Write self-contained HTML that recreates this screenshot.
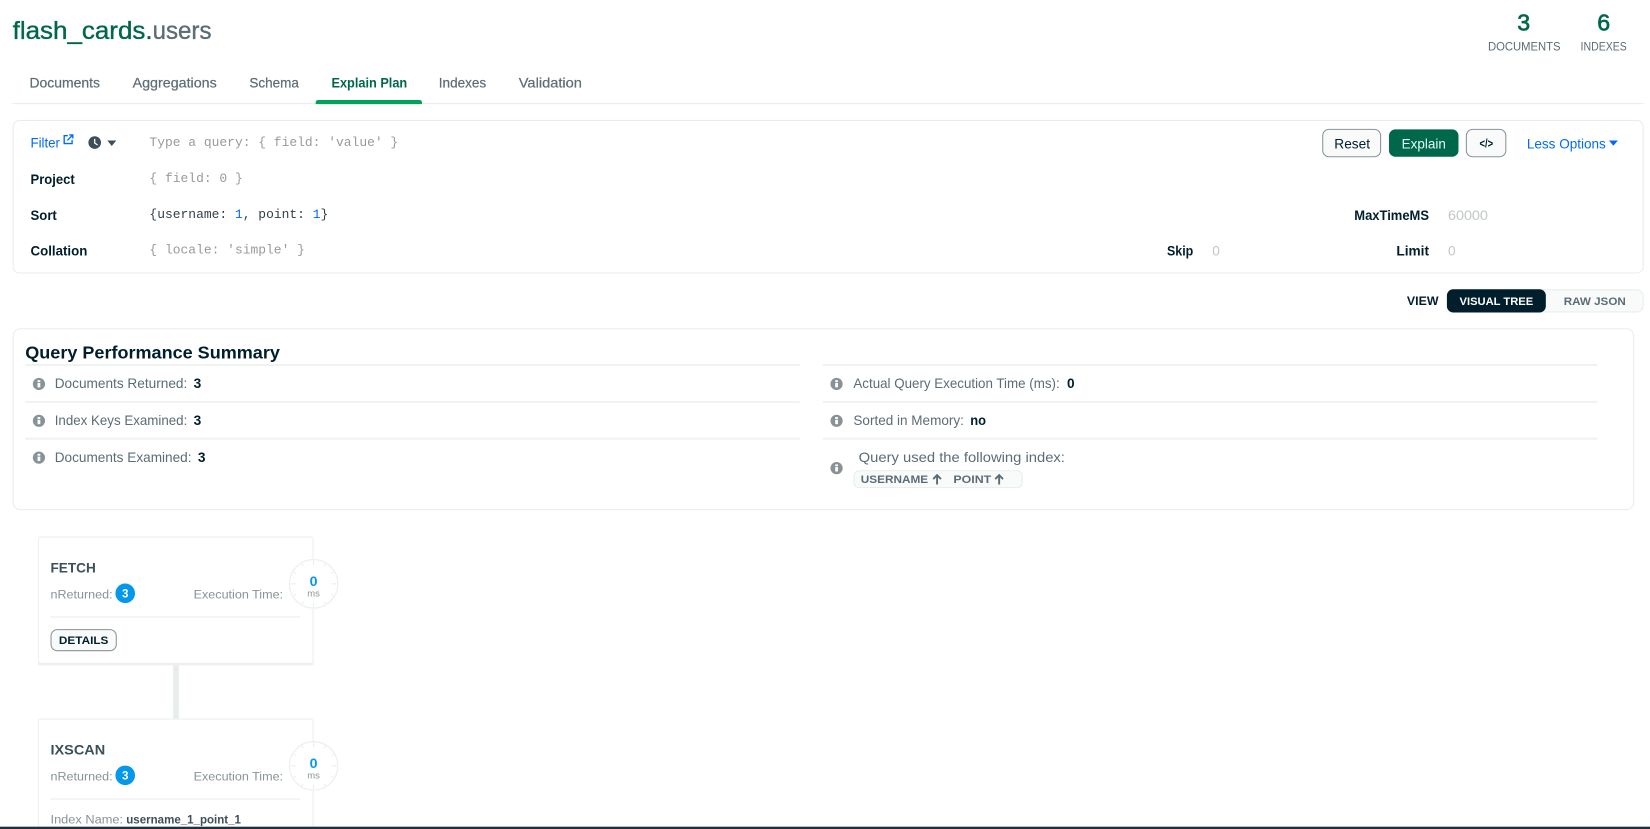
<!DOCTYPE html>
<html>
<head>
<meta charset="utf-8">
<title>flash_cards.users</title>
<style>
html,body{margin:0;padding:0;background:#fff;width:1650px;height:829px;overflow:hidden}
svg{display:block;filter:blur(.3px)}
text{font-family:"Liberation Sans",sans-serif;white-space:pre}
.m{font-family:"Liberation Mono",monospace;font-size:12.32px;fill:#9a9a9a}
.tab{font-size:13px;fill:#5C6C75;stroke:#5C6C75;stroke-width:.2}
.lb{font-size:13px;font-weight:700;fill:#001E2B}
.row{font-size:13px;fill:#5C6C75}
.val{font-size:13px;font-weight:700;fill:#001E2B}
.dim{font-size:13px;fill:#C1C7C6}
.sm{font-size:11.5px;fill:#889397}
.cap{font-size:10.5px;font-weight:700}
.ln{stroke:#F0F2F1;stroke-width:2}
.tk{stroke:#E8EDEB;stroke-width:1}
</style>
</head>
<body>
<svg xmlns="http://www.w3.org/2000/svg" width="1650" height="829" viewBox="0 0 1568 788" preserveAspectRatio="none">
<defs>
<g id="info"><circle r="5.8" fill="#889397"/><rect x="-1.3" y="-1" width="2.6" height="4.2" fill="#fff"/><rect x="-1.3" y="-3.6" width="2.6" height="1.8" fill="#fff"/></g>
<g id="clk">
<circle r="23" fill="#fff" stroke="#EDF0EF" stroke-width="1.2"/>
<path class="tk" d="M0-22V-18M0 18V22M-22 0H-17M17 0H22M11-19L10-17M19-11L17-10M19 11L17 10M11 19L10 17M-11 19L-10 17M-19 11L-17 10M-19-11L-17-10M-11-19L-10-17" fill="none"/>
</g>
<g id="arr"><path d="M4.5 9.5V1M.8 4.4L4.5 .6L8.2 4.4" fill="none" stroke="#5C6C75" stroke-width="1.8"/></g>
</defs>

<rect width="1568" height="788" fill="#fff"/>

<!-- header -->
<text x="12" y="37" font-size="24" fill="#00684A" stroke="#00684A" stroke-width=".35" textLength="133" lengthAdjust="spacingAndGlyphs">flash_cards.</text>
<text x="145" y="37" font-size="24" fill="#5C6C75" stroke="#5C6C75" stroke-width=".35" textLength="56" lengthAdjust="spacingAndGlyphs">users</text>
<text x="1448" y="29" font-size="22" fill="#00684A" stroke="#00684A" stroke-width=".6" text-anchor="middle">3</text>
<text x="1524" y="29" font-size="22" fill="#00684A" stroke="#00684A" stroke-width=".6" text-anchor="middle">6</text>
<text x="1414" y="48" font-size="11" fill="#5C6C75" textLength="69" lengthAdjust="spacingAndGlyphs">DOCUMENTS</text>
<text x="1502" y="48" font-size="11" fill="#5C6C75" textLength="44" lengthAdjust="spacingAndGlyphs">INDEXES</text>

<!-- tabs -->
<text class="tab" x="28" y="83" textLength="67" lengthAdjust="spacingAndGlyphs">Documents</text>
<text class="tab" x="126" y="83" textLength="80" lengthAdjust="spacingAndGlyphs">Aggregations</text>
<text class="tab" x="237" y="83" textLength="47" lengthAdjust="spacingAndGlyphs">Schema</text>
<text x="315" y="83" font-size="13" fill="#00684A" textLength="72" lengthAdjust="spacingAndGlyphs" font-weight="700">Explain Plan</text>
<text class="tab" x="417" y="83" textLength="45" lengthAdjust="spacingAndGlyphs">Indexes</text>
<text class="tab" x="493" y="83" textLength="60" lengthAdjust="spacingAndGlyphs">Validation</text>
<rect x="12" y="98" width="1550" height="1" fill="#E8EDEB"/>
<path d="M300 99V97.5Q300 95 302.5 95H398.5Q401 95 401 97.5V99Z" fill="#00A35C"/>

<!-- query card -->
<rect x="12.5" y="114.5" width="1549" height="145" rx="6" fill="#fff" stroke="#E8EDEB"/>
<text x="29" y="140" font-size="13" fill="#016BF8" textLength="28" lengthAdjust="spacingAndGlyphs">Filter</text>
<g fill="none" stroke="#016BF8" stroke-width="1.3"><path d="M64.5 129H61V136.5H68.5V133"/><path d="M64 133.5L68.8 128.7M65.8 128.3H69.2V131.7"/></g>
<circle cx="90" cy="135.5" r="6" fill="#3D4F58"/>
<path d="M90 132V136L92.8 137.8" fill="none" stroke="#fff" stroke-width="1.2"/>
<path d="M102 133.5H110.5L106.2 138.8Z" fill="#3D4F58"/>
<text class="m" x="142" y="139">Type a query: { field: 'value' }</text>
<text class="lb" x="29" y="175" textLength="42" lengthAdjust="spacingAndGlyphs">Project</text>
<text class="m" x="142" y="173">{ field: 0 }</text>
<text class="lb" x="29" y="209" textLength="25" lengthAdjust="spacingAndGlyphs">Sort</text>
<text class="m" x="142" y="207" style="fill:#333f46">{username: </text>
<text class="m" x="223.3" y="207" style="fill:#016BF8">1</text>
<text class="m" x="230.7" y="207" style="fill:#333f46">, point: </text>
<text class="m" x="297.2" y="207" style="fill:#016BF8">1</text>
<text class="m" x="304.6" y="207" style="fill:#333f46">}</text>
<text class="lb" x="29" y="243" textLength="54" lengthAdjust="spacingAndGlyphs">Collation</text>
<text class="m" x="142" y="241">{ locale: 'simple' }</text>
<text class="lb" x="1109" y="243" textLength="25" lengthAdjust="spacingAndGlyphs">Skip</text>
<text class="dim" x="1152" y="243">0</text>
<text class="lb" x="1327" y="243" textLength="31" lengthAdjust="spacingAndGlyphs">Limit</text>
<text class="dim" x="1376" y="243">0</text>
<text class="lb" x="1287" y="209" textLength="71" lengthAdjust="spacingAndGlyphs">MaxTimeMS</text>
<text class="dim" x="1376" y="209" textLength="38" lengthAdjust="spacingAndGlyphs">60000</text>

<rect x="1257" y="123" width="55" height="26" rx="6" fill="#F9FBFA" stroke="#889397"/>
<text x="1268" y="141" font-size="13" fill="#001E2B" textLength="34" lengthAdjust="spacingAndGlyphs">Reset</text>
<rect x="1320" y="123" width="66" height="26" rx="6" fill="#00684A"/>
<text x="1332" y="141" font-size="13" fill="#E3FCF7" textLength="42" lengthAdjust="spacingAndGlyphs">Explain</text>
<rect x="1393.5" y="123" width="37.5" height="26" rx="6" fill="#F9FBFA" stroke="#889397"/>
<text x="1406" y="140" font-size="11" font-weight="700" fill="#001E2B" textLength="13" lengthAdjust="spacingAndGlyphs">&lt;/&gt;</text>
<text x="1451" y="141" font-size="13" fill="#016BF8" textLength="75" lengthAdjust="spacingAndGlyphs">Less Options</text>
<path d="M1529 133.5H1537.5L1533.2 138.5Z" fill="#016BF8"/>

<!-- view toggle -->
<text x="1337" y="290" font-size="11" font-weight="700" fill="#001E2B" textLength="30" lengthAdjust="spacingAndGlyphs">VIEW</text>
<rect x="1375.5" y="275.5" width="186" height="21" rx="6" fill="#F9FBFA" stroke="#E8EDEB"/>
<rect x="1375" y="275" width="94" height="22" rx="6" fill="#001E2B"/>
<text class="cap" x="1387" y="290" fill="#fff" textLength="70" lengthAdjust="spacingAndGlyphs">VISUAL TREE</text>
<text class="cap" x="1486" y="290" fill="#5C6C75" textLength="59" lengthAdjust="spacingAndGlyphs">RAW JSON</text>

<!-- summary -->
<rect x="12.5" y="312.5" width="1540" height="172" rx="7" fill="#fff" stroke="#E8EDEB"/>
<text x="24" y="341" font-size="17" font-weight="700" fill="#001E2B" textLength="242" lengthAdjust="spacingAndGlyphs">Query Performance Summary</text>
<path class="ln" d="M24 347H760M24 382H760M24 417H760M782 347H1518M782 382H1518M782 417H1518"/>
<use href="#info" x="37" y="365"/>
<text class="row" x="52" y="369" textLength="126" lengthAdjust="spacingAndGlyphs">Documents Returned:</text>
<text class="val" x="184" y="369">3</text>
<use href="#info" x="37" y="400"/>
<text class="row" x="52" y="404" textLength="126" lengthAdjust="spacingAndGlyphs">Index Keys Examined:</text>
<text class="val" x="184" y="404">3</text>
<use href="#info" x="37" y="435"/>
<text class="row" x="52" y="439" textLength="130" lengthAdjust="spacingAndGlyphs">Documents Examined:</text>
<text class="val" x="188" y="439">3</text>
<use href="#info" x="795" y="365"/>
<text class="row" x="811" y="369" textLength="196" lengthAdjust="spacingAndGlyphs">Actual Query Execution Time (ms):</text>
<text class="val" x="1014" y="369">0</text>
<use href="#info" x="795" y="400"/>
<text class="row" x="811" y="404" textLength="105" lengthAdjust="spacingAndGlyphs">Sorted in Memory:</text>
<text class="val" x="922" y="404" textLength="15" lengthAdjust="spacingAndGlyphs">no</text>
<use href="#info" x="795" y="445"/>
<text class="row" x="816" y="439" textLength="196" lengthAdjust="spacingAndGlyphs">Query used the following index:</text>
<rect x="811.5" y="447.5" width="160" height="16" rx="5" fill="#F9FBFA" stroke="#E8EDEB"/>
<text class="cap" x="818" y="459" fill="#5C6C75" textLength="64" lengthAdjust="spacingAndGlyphs">USERNAME</text>
<use href="#arr" x="886" y="451"/>
<text class="cap" x="906" y="459" fill="#5C6C75" textLength="36" lengthAdjust="spacingAndGlyphs">POINT</text>
<use href="#arr" x="945" y="451"/>

<!-- connector -->
<rect x="164.5" y="631" width="5.5" height="53" fill="#E8EDEB"/>

<!-- FETCH card -->
<rect x="36" y="629" width="262" height="3.5" rx="1.5" fill="#EDF0EF"/>
<rect x="36.5" y="510.5" width="261" height="120" rx="2" fill="#fff" stroke="#EDF0EF"/>
<text x="48" y="544" font-size="13" font-weight="700" fill="#3D4F58" textLength="43" lengthAdjust="spacingAndGlyphs">FETCH</text>
<text class="sm" x="48" y="569" textLength="59" lengthAdjust="spacingAndGlyphs">nReturned:</text>
<circle cx="119" cy="564" r="9.3" fill="#0498EC"/>
<text x="119" y="568" font-size="11" font-weight="700" fill="#fff" text-anchor="middle">3</text>
<text class="sm" x="184" y="569" textLength="85" lengthAdjust="spacingAndGlyphs">Execution Time:</text>
<rect x="48" y="586" width="237" height="1" fill="#E8EDEB"/>
<rect x="48.5" y="598.5" width="62" height="20" rx="6" fill="#F9FBFA" stroke="#889397"/>
<text class="cap" x="56" y="612" fill="#001E2B" textLength="47" lengthAdjust="spacingAndGlyphs">DETAILS</text>
<use href="#clk" x="298" y="555"/>
<text x="298" y="557" font-size="13.5" font-weight="700" fill="#0498EC" text-anchor="middle">0</text>
<text x="298" y="567" font-size="9" fill="#889397" text-anchor="middle">ms</text>

<!-- IXSCAN card -->
<rect x="36.5" y="683.5" width="261" height="120" rx="2" fill="#fff" stroke="#EDF0EF"/>
<text x="48" y="717" font-size="13" font-weight="700" fill="#3D4F58" textLength="52" lengthAdjust="spacingAndGlyphs">IXSCAN</text>
<text class="sm" x="48" y="742" textLength="59" lengthAdjust="spacingAndGlyphs">nReturned:</text>
<circle cx="119" cy="737" r="9.3" fill="#0498EC"/>
<text x="119" y="741" font-size="11" font-weight="700" fill="#fff" text-anchor="middle">3</text>
<text class="sm" x="184" y="742" textLength="85" lengthAdjust="spacingAndGlyphs">Execution Time:</text>
<rect x="48" y="759" width="237" height="1" fill="#E8EDEB"/>
<text class="sm" x="48" y="783" textLength="69" lengthAdjust="spacingAndGlyphs">Index Name:</text>
<text x="120" y="783" font-size="11" font-weight="700" fill="#3D4F58" textLength="109" lengthAdjust="spacingAndGlyphs">username_1_point_1</text>
<use href="#clk" x="298" y="728"/>
<text x="298" y="730" font-size="13.5" font-weight="700" fill="#0498EC" text-anchor="middle">0</text>
<text x="298" y="740" font-size="9" fill="#889397" text-anchor="middle">ms</text>

<!-- bottom bar -->
<rect x="0" y="785.8" width="1568" height="2.4" fill="#21313C"/>
</svg>
</body>
</html>
